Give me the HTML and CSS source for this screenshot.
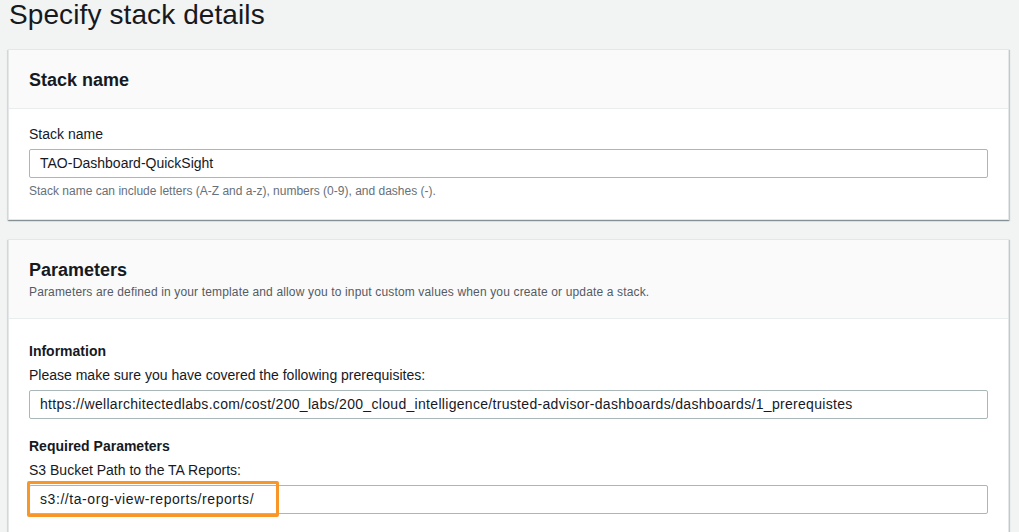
FILE: index.html
```html
<!DOCTYPE html>
<html lang="en">
<head>
<meta charset="utf-8">
<title>Specify stack details</title>
<link rel="stylesheet" href="styles.css">
</head>
<body>
<main class="page">
  <h1 class="page-title">Specify stack details</h1>

  <section class="card card-stack">
    <header class="card-header">
      <h2 class="card-title">Stack name</h2>
    </header>
    <div class="card-body">
      <label class="field-label">Stack name</label>
      <div class="input">TAO-Dashboard-QuickSight</div>
      <p class="hint">Stack name can include letters (A-Z and a-z), numbers (0-9), and dashes (-).</p>
    </div>
  </section>

  <section class="card card-params">
    <header class="card-header params-header">
      <h2 class="card-title">Parameters</h2>
      <p class="card-desc">Parameters are defined in your template and allow you to input custom values when you create or update a stack.</p>
    </header>
    <div class="card-body params-body">
      <h3 class="group-title">Information</h3>
      <label class="field-label plain">Please make sure you have covered the following prerequisites:</label>
      <div class="input input-url">https://wellarchitectedlabs.com/cost/200_labs/200_cloud_intelligence/trusted-advisor-dashboards/dashboards/1_prerequistes</div>

      <h3 class="group-title group-gap">Required Parameters</h3>
      <label class="field-label plain">S3 Bucket Path to the TA Reports:</label>
      <div class="input-wrap">
        <div class="input input-s3">s3://ta-org-view-reports/reports/</div>
        <span class="highlight"></span>
      </div>
    </div>
  </section>
</main>
</body>
</html>
```

FILE: styles.css
```css
html, body {
  margin: 0;
  padding: 0;
  height: 100%;
  overflow: hidden;
}

body {
  background: #f2f3f3;
  font-family: "Liberation Sans", Arial, sans-serif;
  color: #16191f;
}

.page {
  display: flex;
  flex-direction: column;
  padding: 0 10px 0 8px;
}

.page-title {
  margin: -2px 0 0 1px;
  font-size: 28px;
  line-height: 34px;
  font-weight: 400;
  letter-spacing: 0.1px;
  color: #16191f;
}

.card {
  background: #ffffff;
  border: 1px solid #e4e7e7;
  box-shadow: 0 1px 1px 0 rgba(0, 28, 36, 0.3), 1px 1px 1px 0 rgba(0, 28, 36, 0.15), -1px 1px 1px 0 rgba(0, 28, 36, 0.08);
}

.card-stack {
  margin-top: 17px;
}

.card-params {
  margin-top: 19px;
}

.card-header {
  background: #fafafa;
  border-bottom: 1px solid #eaeded;
  padding: 19px 20px 17px;
}

.card-title {
  margin: 0;
  font-size: 18px;
  line-height: 22px;
  font-weight: 700;
  color: #16191f;
}

.card-body {
  display: flex;
  flex-direction: column;
  padding: 15px 20px 20px;
}

.field-label {
  font-size: 14px;
  line-height: 20px;
  color: #16191f;
  margin-bottom: 5px;
}

.input {
  box-sizing: border-box;
  height: 29px;
  border: 1px solid #aab7b8;
  border-radius: 2px;
  background: #ffffff;
  padding: 0 10px;
  font-size: 14px;
  line-height: 27px;
  color: #16191f;
  white-space: nowrap;
  overflow: hidden;
}

.input-url {
  letter-spacing: 0.31px;
}

.input-s3 {
  letter-spacing: 0.57px;
}

.hint {
  margin: 5px 0 0;
  font-size: 12px;
  line-height: 16px;
  color: #687078;
}

/* Parameters card */
.params-header {
  padding: 19px 20px 18px;
}

.card-desc {
  margin: 3px 0 0;
  font-size: 12px;
  line-height: 16px;
  letter-spacing: 0.15px;
  color: #545b64;
}

.params-body {
  padding-top: 22px;
}

.group-title {
  margin: 0;
  font-size: 14px;
  line-height: 20px;
  font-weight: 700;
  color: #16191f;
}

.group-gap {
  margin-top: 17px;
}

.field-label.plain {
  margin-top: 4px;
  margin-bottom: 5px;
}

.input-wrap {
  position: relative;
}

.highlight {
  position: absolute;
  left: -2px;
  top: -4px;
  width: 252px;
  height: 36px;
  box-sizing: border-box;
  border: 3px solid #f8962a;
  border-radius: 2px;
  pointer-events: none;
}
```
